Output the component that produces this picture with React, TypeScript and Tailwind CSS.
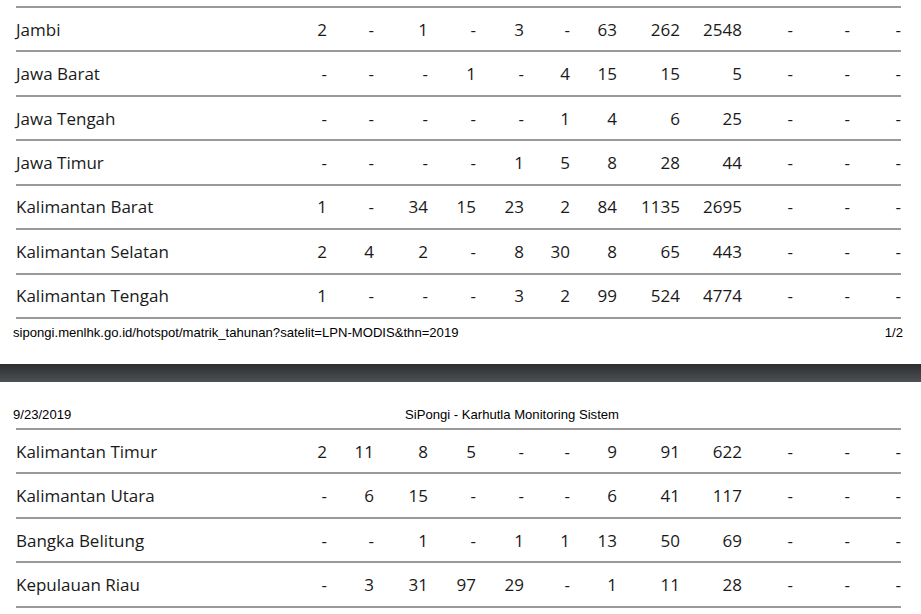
import React from "react";

const page1: [string, string[]][] = [
  ["Jambi", ["2", "-", "1", "-", "3", "-", "63", "262", "2548", "-", "-", "-"]],
  ["Jawa Barat", ["-", "-", "-", "1", "-", "4", "15", "15", "5", "-", "-", "-"]],
  ["Jawa Tengah", ["-", "-", "-", "-", "-", "1", "4", "6", "25", "-", "-", "-"]],
  ["Jawa Timur", ["-", "-", "-", "-", "1", "5", "8", "28", "44", "-", "-", "-"]],
  ["Kalimantan Barat", ["1", "-", "34", "15", "23", "2", "84", "1135", "2695", "-", "-", "-"]],
  ["Kalimantan Selatan", ["2", "4", "2", "-", "8", "30", "8", "65", "443", "-", "-", "-"]],
  ["Kalimantan Tengah", ["1", "-", "-", "-", "3", "2", "99", "524", "4774", "-", "-", "-"]],
];

const page2: [string, string[]][] = [
  ["Kalimantan Timur", ["2", "11", "8", "5", "-", "-", "9", "91", "622", "-", "-", "-"]],
  ["Kalimantan Utara", ["-", "6", "15", "-", "-", "-", "6", "41", "117", "-", "-", "-"]],
  ["Bangka Belitung", ["-", "-", "1", "-", "1", "1", "13", "50", "69", "-", "-", "-"]],
  ["Kepulauan Riau", ["-", "3", "31", "97", "29", "-", "1", "11", "28", "-", "-", "-"]],
];

function Row({ name, vals }: { name: string; vals: string[] }) {
  return (
    <div className="grid h-[44.43px] grid-cols-[264px_47px_47px_54px_48px_48px_46px_47px_63px_62px_51px_57px_51px] items-center border-b-2 border-[#9a9a9a] pt-[1px] text-[17px] leading-[24px] text-[#1a1a1a]">
      <div className="whitespace-nowrap">{name}</div>
      {vals.map((v, i) => (
        <div key={i} className="text-right whitespace-nowrap">
          {v}
        </div>
      ))}
    </div>
  );
}

export default function App() {
  return (
    <div className="w-[921px] bg-white" style={{ fontFamily: '"Open Sans", sans-serif' }}>
      {/* Page 1 */}
      <div className="pt-[6px]">
        <div className="ml-[16px] w-[885px] border-t-2 border-[#9a9a9a]">
          {page1.map(([n, v]) => (
            <Row key={n} name={n} vals={v} />
          ))}
        </div>
        <div
          className="ml-[13px] flex h-[45px] w-[890px] items-start justify-between pt-[6px] text-[13.1px] leading-[15px] text-black"
          style={{ fontFamily: '"Liberation Sans", Arial, sans-serif' }}
        >
          <span>sipongi.menlhk.go.id/hotspot/matrik_tahunan?satelit=LPN-MODIS&amp;thn=2019</span>
          <span>1/2</span>
        </div>
      </div>

      {/* Separator band */}
      <div className="h-[18px] w-full bg-gradient-to-b from-[#2c2e30] to-[#4e5154]" />

      {/* Page 2 */}
      <div>
        <div
          className="ml-[13px] flex h-[46px] w-[888px] items-start pt-[25px] text-[13.1px] leading-[15px] text-black"
          style={{ fontFamily: '"Liberation Sans", Arial, sans-serif' }}
        >
          <span className="w-[392px]">9/23/2019</span>
          <span>SiPongi - Karhutla Monitoring Sistem</span>
        </div>
        <div className="ml-[16px] w-[885px] border-t-2 border-[#9a9a9a]">
          {page2.map(([n, v]) => (
            <Row key={n} name={n} vals={v} />
          ))}
        </div>
      </div>
    </div>
  );
}
